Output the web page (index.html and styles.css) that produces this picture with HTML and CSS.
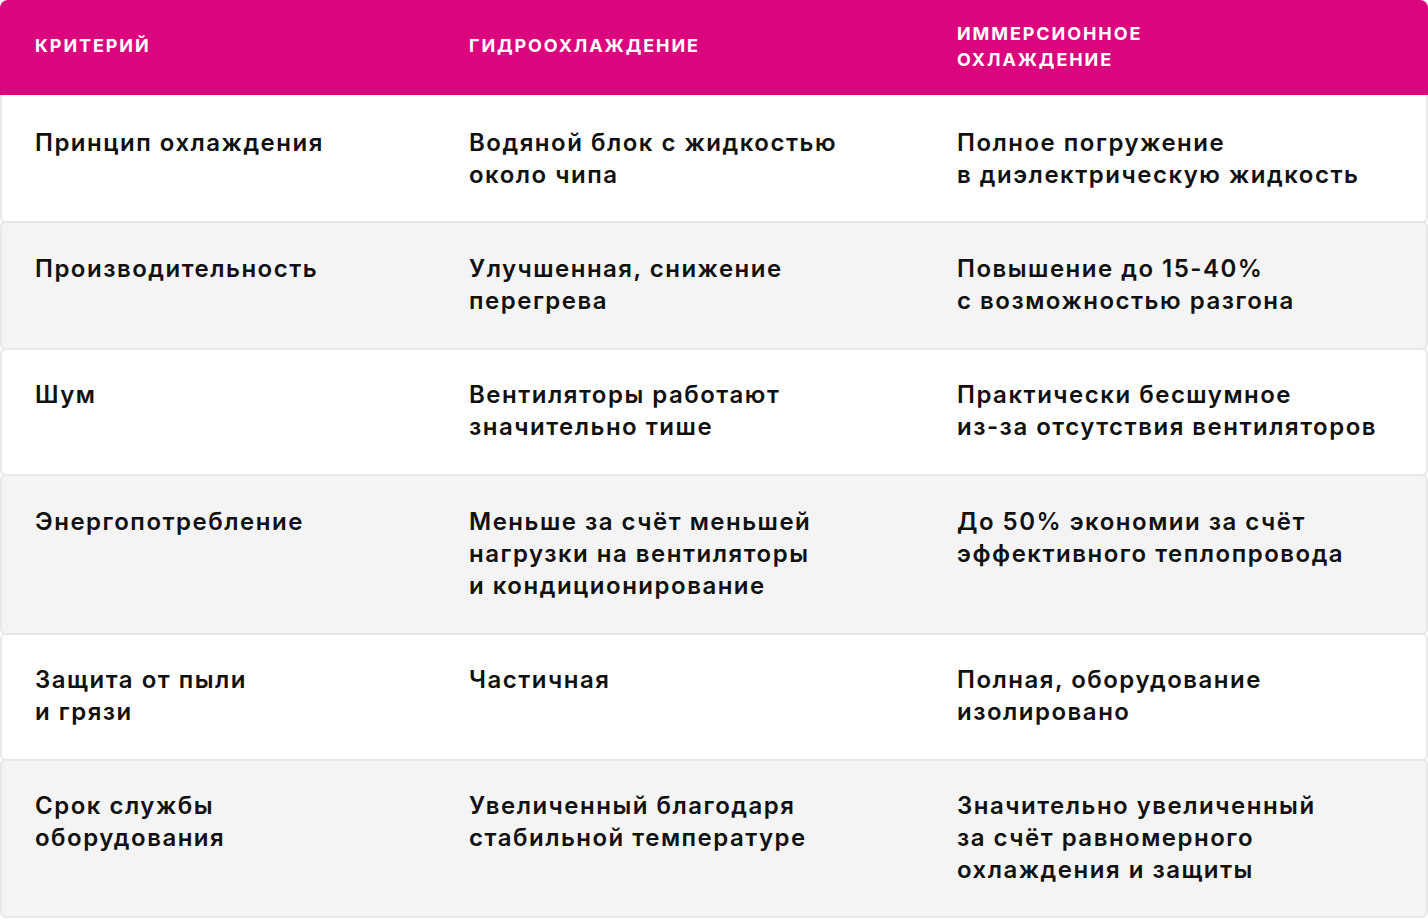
FILE: index.html
```html
<!DOCTYPE html>
<html lang="ru">
<head>
<meta charset="utf-8">
<link rel="stylesheet" href="styles.css">
</head>
<body>
<div class="table">
  <div class="row head">
    <div class="cell">Критерий</div>
    <div class="cell">Гидроохлаждение</div>
    <div class="cell">Иммерсионное<br>охлаждение</div>
  </div>
  <div class="row white">
    <div class="cell">Принцип охлаждения</div>
    <div class="cell">Водяной блок с жидкостью<br>около чипа</div>
    <div class="cell">Полное погружение<br>в диэлектрическую жидкость</div>
  </div>
  <div class="row grey">
    <div class="cell">Производительность</div>
    <div class="cell">Улучшенная, снижение<br>перегрева</div>
    <div class="cell">Повышение до 15-40%<br>с возможностью разгона</div>
  </div>
  <div class="row white">
    <div class="cell">Шум</div>
    <div class="cell">Вентиляторы работают<br>значительно тише</div>
    <div class="cell">Практически бесшумное<br>из-за отсутствия вентиляторов</div>
  </div>
  <div class="row grey">
    <div class="cell">Энергопотребление</div>
    <div class="cell">Меньше за счёт меньшей<br>нагрузки на вентиляторы<br>и кондиционирование</div>
    <div class="cell">До 50% экономии за счёт<br>эффективного теплопровода</div>
  </div>
  <div class="row white">
    <div class="cell">Защита от пыли<br>и грязи</div>
    <div class="cell">Частичная</div>
    <div class="cell">Полная, оборудование<br>изолировано</div>
  </div>
  <div class="row grey">
    <div class="cell">Срок службы<br>оборудования</div>
    <div class="cell">Увеличенный благодаря<br>стабильной температуре</div>
    <div class="cell">Значительно увеличенный<br>за счёт равномерного<br>охлаждения и защиты</div>
  </div>
</div>
</body>
</html>
```
FILE: styles.css
```css
html, body {
  margin: 0;
  padding: 0;
  background: #ffffff;
}
body {
  font-family: Inter, "Noto Sans", sans-serif;
  color: #111111;
}
.table {
  width: 1428px;
  display: flex;
  flex-direction: column;
}
.row {
  display: grid;
  grid-template-columns: 434px 488px 1fr;
  box-sizing: border-box;
}
.cell {
  padding-left: 35px;
}
.head {
  background: #db067e;
  color: #ffffff;
  border-radius: 8px 8px 0 0;
  height: 95px;
  align-items: center;
  font-size: 18px;
  line-height: 26px;
  font-weight: 700;
  text-transform: uppercase;
  letter-spacing: 1.9px;
}
.head .cell:nth-child(1),
.head .cell:nth-child(2) {
  padding-bottom: 4px;
}
.head .cell:nth-child(3) {
  padding-bottom: 1px;
}
.white, .grey {
  border: 2px solid #e8e8e8;
  border-radius: 6px;
  margin-top: -2px;
  padding: 30px 0 31px;
  font-size: 24px;
  line-height: 32px;
  font-weight: 600;
  letter-spacing: 1.5px;
}
.white .cell, .grey .cell {
  padding-left: 33px;
}
.head + .white {
  margin-top: 0;
  border-top: none;
  border-radius: 0 0 6px 6px;
  padding-top: 32px;
  padding-bottom: 30px;
}
.white {
  background: #ffffff;
}
.grey {
  background: #f4f4f4;
}
.grey + .white {
  padding-top: 29px;
  padding-bottom: 31px;
}
.grey:last-child {
  padding-top: 29px;
  padding-bottom: 30px;
}
```
